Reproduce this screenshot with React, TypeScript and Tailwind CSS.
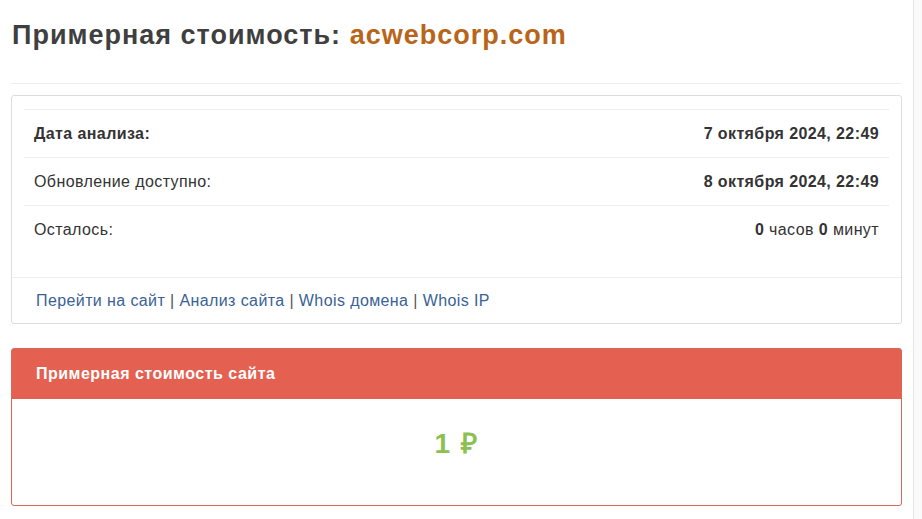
import React from "react";

export default function App() {
  const font = { fontFamily: '"Liberation Sans", Arial, sans-serif' };
  return (
    <div className="flex min-h-[519px] w-[922px] bg-white text-[#333]" style={font}>
      <main className="w-[913px] shrink-0 px-[11px]">
        <h1 className="mt-[20px] pl-[1px] text-[27px] font-bold leading-[30px] tracking-[1px] text-[#3f3f3f]">
          Примерная стоимость: <span className="text-[#b8651a]">acwebcorp.com</span>
        </h1>
        <hr className="mt-[33px] border-0 border-t border-[#eeeeee]" />
        <section className="mt-[11px] rounded-[3px] border border-[#dddddd] bg-white">
          <div className="px-[12px] pt-[13px] pb-[24px]">
            <div className="border-t border-[#eeeeee] text-[16px] leading-[20px] tracking-[0.4px]">
              <div className="flex h-[47px] items-center justify-between px-[10px]">
                <span className="font-bold">Дата анализа:</span>
                <span className="font-bold">7 октября 2024, 22:49</span>
              </div>
              <div className="flex h-[48px] items-center justify-between border-t border-[#eeeeee] px-[10px]">
                <span>Обновление доступно:</span>
                <span className="font-bold">8 октября 2024, 22:49</span>
              </div>
              <div className="flex h-[48px] items-center justify-between border-t border-[#eeeeee] px-[10px]">
                <span>Осталось:</span>
                <span>
                  <b>0</b> часов <b>0</b> минут
                </span>
              </div>
            </div>
          </div>
          <div className="flex h-[46px] items-center border-t border-[#eeeeee] pl-[24px] text-[16px] tracking-[0.4px] text-[#555]">
            <a className="text-[#3a6296]">Перейти на сайт</a>
            <span>&nbsp;|&nbsp;</span>
            <a className="text-[#3a6296]">Анализ сайта</a>
            <span>&nbsp;|&nbsp;</span>
            <a className="text-[#3a6296]">Whois домена</a>
            <span>&nbsp;|&nbsp;</span>
            <a className="text-[#3a6296]">Whois IP</a>
          </div>
        </section>
        <section className="mt-[24px] rounded-[3px] border border-[#d9685a] bg-white">
          <div className="flex h-[50px] items-center bg-[#e46151] pl-[24px] text-[16px] font-bold tracking-[0.5px] text-white">
            Примерная стоимость сайта
          </div>
          <div className="pt-[30px] pb-[46px] text-center text-[28px] font-bold leading-[30px] tracking-[1.5px] text-[#8cc152]">
            1 ₽
          </div>
        </section>
      </main>
      <aside className="flex-1 border-l border-[#e7e7e7] bg-[#fafafa]" />
    </div>
  );
}
